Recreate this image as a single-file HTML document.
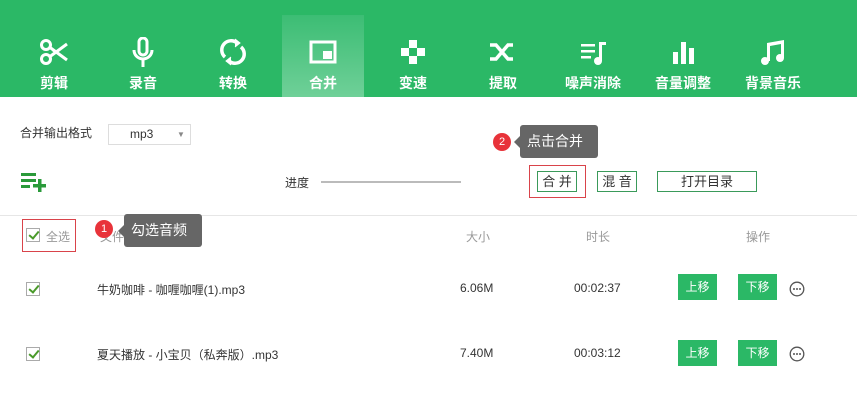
<!DOCTYPE html>
<html><head><meta charset="utf-8"><style>
*{margin:0;padding:0;box-sizing:border-box}
body{width:868px;height:419px;background:#fff;font-family:"Liberation Sans","Noto Sans CJK SC",sans-serif;position:relative;overflow:hidden;color:#333}
.hdr{position:absolute;left:0;top:0;width:857px;height:97px;background:#2bb866}
.nav{position:absolute;top:15px;width:82px;height:82px;text-align:center;color:#fff}
.nav.act{background:linear-gradient(#3cbd74,#6fd098)}
.nav svg{position:absolute;left:26px;top:22px;width:30px;height:30px}
.nav span{position:absolute;left:0;right:0;top:58px;font-size:14px;font-weight:bold}
.a{position:absolute;white-space:nowrap}
.btn{position:absolute;border:1px solid #3a9a5a;font-size:13px;text-align:center;line-height:19px;color:#333;height:21px}
.g{position:absolute;background:#2bb866;color:#fff;font-size:12px;text-align:center;line-height:26px;width:39px;height:26px}
.cb{position:absolute;width:14px;height:14px;border:1px solid #aaa;background:#fff}
.cb:after{content:"";position:absolute;left:4px;top:0px;width:4px;height:8px;border:solid #4a9a2a;border-width:0 2px 2px 0;transform:rotate(40deg)}
.dot{position:absolute;width:18px;height:18px;border-radius:50%;background:#e8333a;color:#fff;font-size:11px;text-align:center;line-height:18px}
.tip{position:absolute;background:#666;color:#fff;font-size:14px;border-radius:3px;line-height:33px;padding-left:7px}
.tip:before{content:"";position:absolute;left:-6px;top:11px;border:6px solid transparent;border-left:0;border-right-color:#666}
</style></head><body>
<div class="hdr">
<div class="nav" style="left:13px"><svg viewBox="0 0 30 30" fill="none" stroke="#fff" stroke-width="3"><circle cx="7" cy="8" r="4.5"/><circle cx="7" cy="22" r="4.5"/><path d="M11 10.5L28 23M11 19.5L28 7M17 15l-3-2"/></svg><span>剪辑</span></div>
<div class="nav" style="left:102px"><svg viewBox="0 0 30 30" fill="none" stroke="#fff" stroke-width="3"><rect x="11" y="1" width="8" height="17" rx="4"/><path d="M6 13a9 9 0 0 0 18 0M15 22v8"/></svg><span>录音</span></div>
<div class="nav" style="left:192px"><svg viewBox="0 0 30 30" fill="none" stroke="#fff" stroke-width="3.5"><path d="M7 20A9 9 0 0 1 19 6M23 10A9 9 0 0 1 11 24"/><path d="M17 2l5 4-5 4M13 20l-5 4 5 4" fill="#fff" stroke-width="1"/></svg><span>转换</span></div>
<div class="nav act" style="left:282px"><svg viewBox="0 0 30 30" fill="none" stroke="#fff" stroke-width="3"><rect x="3" y="5" width="24" height="20"/><rect x="15" y="14" width="9" height="8" fill="#fff" stroke="none"/></svg><span>合并</span></div>
<div class="nav" style="left:372px"><svg viewBox="0 0 30 30" fill="#fff"><rect x="11" y="3" width="8" height="8"/><rect x="3" y="11" width="8" height="8"/><rect x="19" y="11" width="8" height="8"/><rect x="11" y="19" width="8" height="8"/></svg><span>变速</span></div>
<div class="nav" style="left:462px"><svg viewBox="0 0 30 30" fill="none" stroke="#fff" stroke-width="3.5"><path d="M2 8h6l12 14h5M2 22h6l12-14h5"/></svg><span>提取</span></div>
<div class="nav" style="left:552px"><svg viewBox="0 0 30 30" fill="#fff"><rect x="3" y="7" width="14" height="2.5"/><rect x="3" y="13" width="14" height="2.5"/><rect x="3" y="19" width="10" height="2.5"/><rect x="21" y="5" width="3" height="19"/><rect x="21" y="5" width="7" height="3"/><circle cx="20" cy="24" r="4"/></svg><span>噪声消除</span></div>
<div class="nav" style="left:642px"><svg viewBox="0 0 30 30" fill="#fff"><rect x="5" y="15" width="5" height="12"/><rect x="13" y="5" width="5" height="22"/><rect x="21" y="11" width="5" height="16"/></svg><span>音量调整</span></div>
<div class="nav" style="left:732px"><svg viewBox="0 0 30 30" fill="#fff"><path d="M9 6l17-3v18h-3V7l-11 2v15h-3z"/><circle cx="7" cy="24" r="4"/><circle cx="22" cy="21" r="4"/></svg><span>背景音乐</span></div>
</div>

<div class="a" style="left:20px;top:124px;font-size:12px">合并输出格式</div>
<div class="a" style="left:108px;top:124px;width:83px;height:21px;border:1px solid #ddd;font-size:12px;line-height:19px;padding-left:21px">mp3<span style="position:absolute;left:68px;font-size:8px;color:#888">▼</span></div>
<svg class="a" style="left:21px;top:172px" width="28" height="20" viewBox="0 0 28 20" fill="#2a9a3a"><rect x="0" y="1" width="15" height="3"/><rect x="0" y="7" width="15" height="3"/><rect x="0" y="13" width="9" height="3"/><rect x="17" y="7" width="3.5" height="13"/><rect x="12" y="12" width="13" height="3.5"/></svg>
<div class="a" style="left:285px;top:174px;font-size:12px">进度</div>
<div class="a" style="left:321px;top:181px;width:140px;height:2px;background:#bbb"></div>

<div class="dot" style="left:493px;top:133px">2</div>
<div class="tip" style="left:520px;top:125px;width:78px">点击合并</div>
<div class="a" style="left:529px;top:165px;width:57px;height:33px;border:1px solid #d9434a"></div>
<div class="btn" style="left:537px;top:171px;width:40px">合 并</div>
<div class="btn" style="left:597px;top:171px;width:40px">混 音</div>
<div class="btn" style="left:657px;top:171px;width:100px">打开目录</div>

<div class="a" style="left:0;top:215px;width:857px;height:1px;background:#e6e6e6"></div>
<div class="a" style="left:22px;top:219px;width:54px;height:33px;border:1px solid #d9434a"></div>
<div class="cb" style="left:26px;top:228px"></div>
<div class="a" style="left:46px;top:228px;font-size:12px;color:#999">全选</div>
<div class="a" style="left:100px;top:228px;font-size:12px;color:#999">文件名称</div>
<div class="dot" style="left:95px;top:220px">1</div>
<div class="tip" style="left:124px;top:214px;width:78px">勾选音频</div>
<div class="a" style="left:466px;top:228px;font-size:12px;color:#999">大小</div>
<div class="a" style="left:586px;top:228px;font-size:12px;color:#999">时长</div>
<div class="a" style="left:746px;top:228px;font-size:12px;color:#999">操作</div>

<div class="cb" style="left:26px;top:282px"></div>
<div class="a" style="left:97px;top:281px;font-size:12px">牛奶咖啡 - 咖喱咖喱(1).mp3</div>
<div class="a" style="left:460px;top:281px;font-size:12px">6.06M</div>
<div class="a" style="left:574px;top:281px;font-size:12px">00:02:37</div>
<div class="g" style="left:678px;top:274px">上移</div>
<div class="g" style="left:738px;top:274px">下移</div>
<svg class="a" style="left:789px;top:281px" width="16" height="16" viewBox="0 0 16 16"><circle cx="8" cy="8" r="6.8" fill="none" stroke="#555" stroke-width="1.3"/><circle cx="5" cy="8" r="1" fill="#555"/><circle cx="8" cy="8" r="1" fill="#555"/><circle cx="11" cy="8" r="1" fill="#555"/></svg>

<div class="cb" style="left:26px;top:347px"></div>
<div class="a" style="left:97px;top:346px;font-size:12px">夏天播放 - 小宝贝（私奔版）.mp3</div>
<div class="a" style="left:460px;top:346px;font-size:12px">7.40M</div>
<div class="a" style="left:574px;top:346px;font-size:12px">00:03:12</div>
<div class="g" style="left:678px;top:340px">上移</div>
<div class="g" style="left:738px;top:340px">下移</div>
<svg class="a" style="left:789px;top:346px" width="16" height="16" viewBox="0 0 16 16"><circle cx="8" cy="8" r="6.8" fill="none" stroke="#555" stroke-width="1.3"/><circle cx="5" cy="8" r="1" fill="#555"/><circle cx="8" cy="8" r="1" fill="#555"/><circle cx="11" cy="8" r="1" fill="#555"/></svg>
</body></html>
